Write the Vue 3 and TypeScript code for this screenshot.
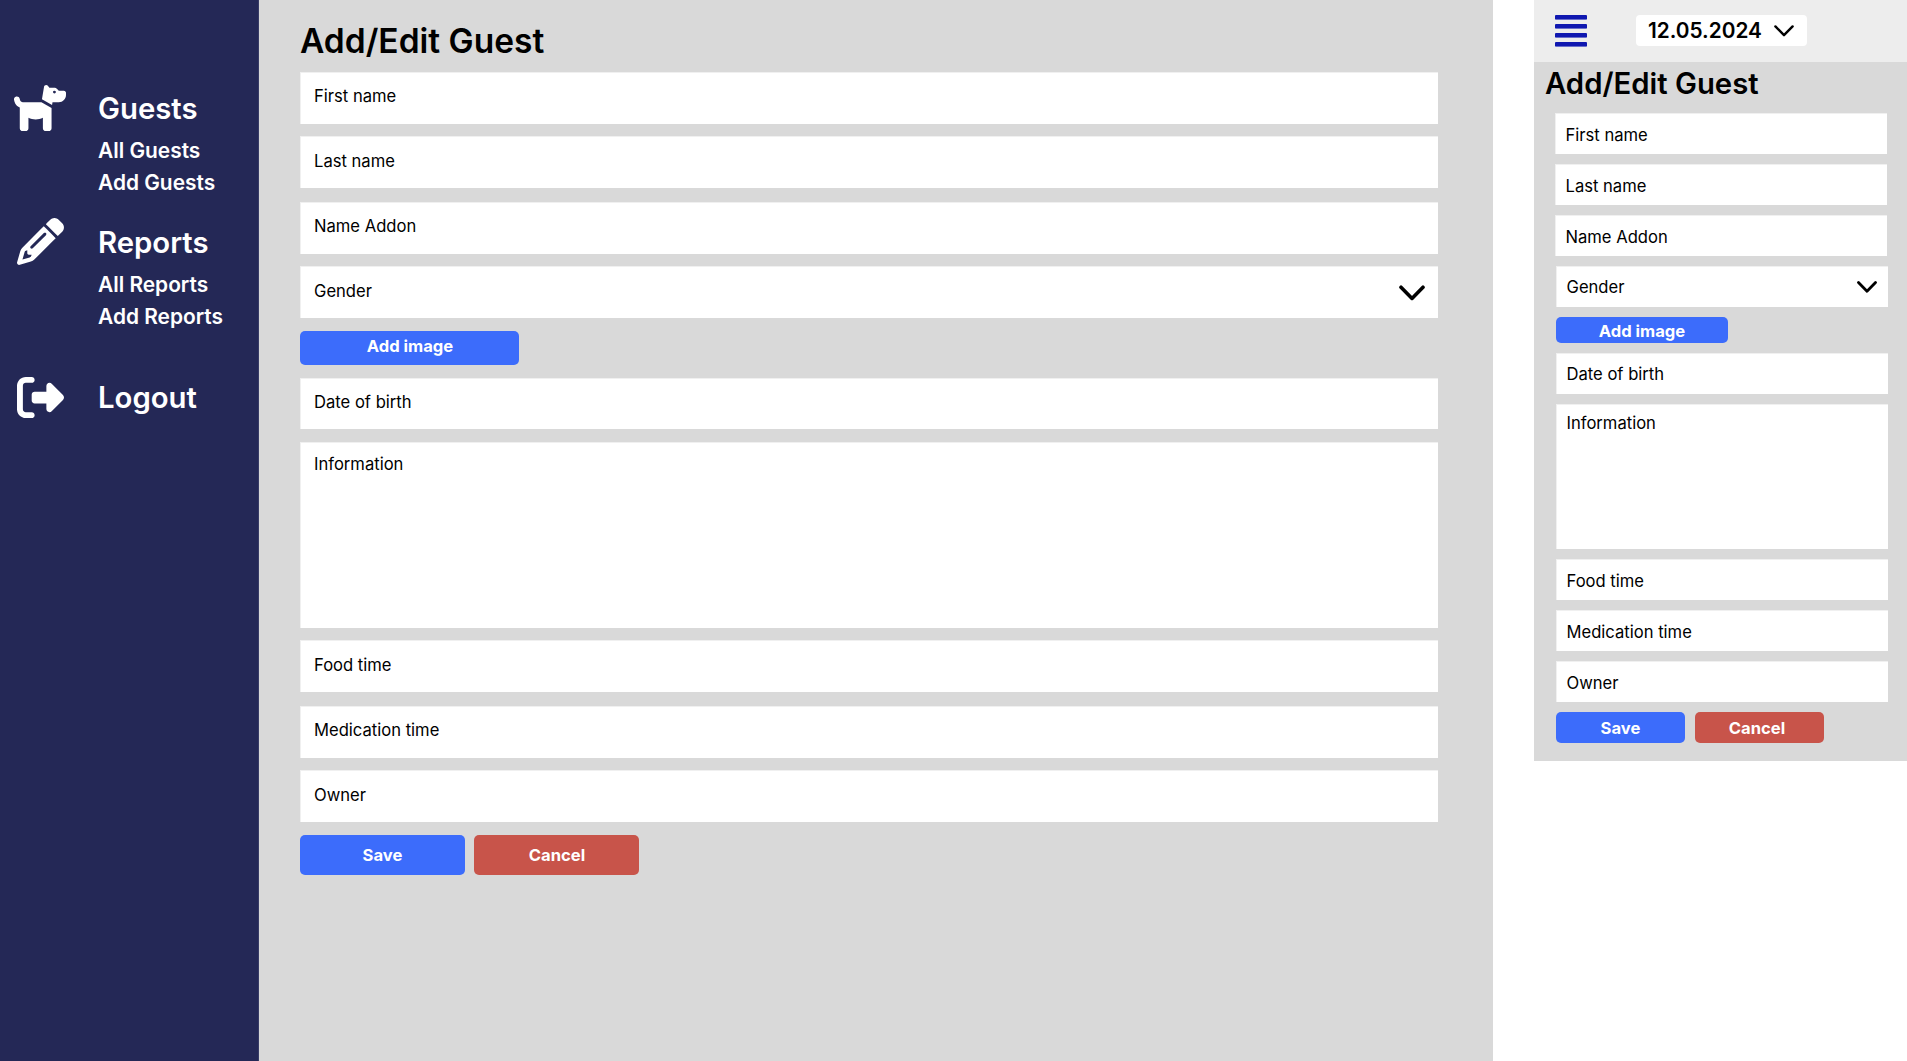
<script setup lang="ts">
interface NavGroup {
  title: string
  icon: string
  viewBox: string
  kind: string
  links: string[]
}

interface FormRow {
  label: string
  kind: 'text' | 'select' | 'area' | 'upload' | 'day'
  low?: boolean
}

const nav: NavGroup[] = [
  {
    title: 'Guests',
    kind: 'dog',
    viewBox: '0 0 576 512',
    icon: 'M309.6 158.5L332.7 19.8C334.6 8.4 344.5 0 356.1 0c7.5 0 14.5 3.5 19 9.5L392 32h52.1c12.7 0 24.9 5.1 33.9 14.1L496 64h56c13.3 0 24 10.7 24 24v24c0 44.2-35.8 80-80 80H464 448 426.7l-5.1 30.5-112-64zM416 256.1L416 480c0 17.7-14.3 32-32 32H352c-17.7 0-32-14.3-32-32V364.8c-24 12.3-51.2 19.2-80 19.2s-56-6.9-80-19.2V480c0 17.7-14.3 32-32 32H96c-17.7 0-32-14.3-32-32V249.8c-28.8-10.9-51.4-35.3-59.2-66.5L1 167.8c-4.3-17.1 6.1-34.5 23.3-38.8s34.5 6.1 38.8 23.3l3.9 15.5C70.5 182 83.3 192 98 192h30 16H303.8L416 256.1zM464 80a16 16 0 1 0 -32 0 16 16 0 1 0 32 0z',
    links: ['All Guests', 'Add Guests'],
  },
  {
    title: 'Reports',
    kind: 'pencil',
    viewBox: '0 0 512 512',
    icon: 'M410.3 231l11.3-11.3-33.9-33.9-62.1-62.1L291.7 89.8l-11.3 11.3-22.6 22.6L58.6 322.9c-10.4 10.4-18 23.3-22.2 37.4L1 480.7c-2.5 8.4-.2 17.5 6.1 23.7s15.3 8.5 23.7 6.1l120.3-35.4c14.1-4.2 27-11.8 37.4-22.2L387.7 253.7 410.3 231zM160 399.4l-9.1 22.7c-4 3.1-8.5 5.4-13.3 6.9L59.4 452l23-78.1c1.4-4.9 3.8-9.4 6.9-13.3l22.7-9.1v32c0 8.8 7.2 16 16 16h32zM362.7 18.7L348.3 33.2 325.7 55.8 314.3 67.1l33.9 33.9 62.1 62.1 33.9 33.9 11.3-11.3 22.6-22.6 14.5-14.5c25-25 25-65.5 0-90.5L453.3 18.7c-25-25-65.5-25-90.5 0zm-47.4 168l-144 144c-6.2 6.2-16.4 6.2-22.6 0s-6.2-16.4 0-22.6l144-144c6.2-6.2 16.4-6.2 22.6 0s6.2 16.4 0 22.6z',
    links: ['All Reports', 'Add Reports'],
  },
  {
    title: 'Logout',
    kind: 'logout',
    viewBox: '0 0 512 512',
    icon: 'M377.9 105.9L500.7 228.7c7.2 7.2 11.3 17.1 11.3 27.3s-4.1 20.1-11.3 27.3L377.9 406.1c-6.4 6.4-15 9.9-24 9.9c-18.7 0-33.9-15.2-33.9-33.9l0-62.1-128 0c-17.7 0-32-14.3-32-32l0-64c0-17.7 14.3-32 32-32l128 0 0-62.1c0-18.7 15.2-33.9 33.9-33.9c9 0 17.6 3.6 24 9.9zM160 96L96 96c-17.7 0-32 14.3-32 32l0 256c0 17.7 14.3 32 32 32l64 0c17.7 0 32 14.3 32 32s-14.3 32-32 32l-64 0c-53 0-96-43-96-96L0 128C0 75 43 32 96 32l64 0c17.7 0 32 14.3 32 32s-14.3 32-32 32z',
    links: [],
  },
]

const rows: FormRow[] = [
  { label: 'First name', kind: 'text' },
  { label: 'Last name', kind: 'text', low: true },
  { label: 'Name Addon', kind: 'text' },
  { label: 'Gender', kind: 'select', low: true },
  { label: 'Add image', kind: 'upload' },
  { label: 'Date of birth', kind: 'day' },
  { label: 'Information', kind: 'area' },
  { label: 'Food time', kind: 'text', low: true },
  { label: 'Medication time', kind: 'text' },
  { label: 'Owner', kind: 'text', low: true },
]
</script>

<template>
  <div class="board">
    <div class="desktop">
      <nav class="sidebar">
        <section v-for="g in nav" :key="g.title" class="group" :class="g.kind">
          <div class="icon-cell">
            <svg class="icon" :viewBox="g.viewBox"><path :d="g.icon" fill="#fff" /></svg>
          </div>
          <div class="links">
            <a class="nav-title">{{ g.title }}</a>
            <a v-for="l in g.links" :key="l" class="nav-link">{{ l }}</a>
          </div>
        </section>
      </nav>
      <main class="content">
        <h1 class="title">Add/Edit Guest</h1>
        <form class="form">
          <template v-for="r in rows" :key="r.label">
            <button v-if="r.kind === 'upload'" type="button" class="btn blue upload">{{ r.label }}</button>
            <div v-else class="field" :class="[r.kind, { low: r.low }]">
              <span class="label">{{ r.label }}</span>
              <svg v-if="r.kind === 'select'" class="chevron" viewBox="0 0 26 16">
                <path d="M2 2.2 13 13.4 24 2.2" />
              </svg>
            </div>
          </template>
          <div class="actions">
            <button type="button" class="btn blue">Save</button>
            <button type="button" class="btn red">Cancel</button>
          </div>
        </form>
      </main>
    </div>

    <div class="mobile">
      <header class="topbar">
        <div class="burger"><i></i><i></i><i></i><i></i></div>
        <div class="date">
          <span>12.05.2024</span>
          <svg class="date-chevron" viewBox="0 0 20 12"><path d="M1.4 1.4 10 10.2 18.6 1.4" /></svg>
        </div>
      </header>
      <h1 class="title">Add/Edit Guest</h1>
      <form class="form">
        <template v-for="r in rows" :key="r.label">
          <button v-if="r.kind === 'upload'" type="button" class="btn blue upload">{{ r.label }}</button>
          <div v-else class="field" :class="r.kind">
            <span class="label">{{ r.label }}</span>
            <svg v-if="r.kind === 'select'" class="chevron" viewBox="0 0 20 12">
              <path d="M1.5 1.6 10 10.2 18.5 1.6" />
            </svg>
          </div>
        </template>
        <div class="actions">
          <button type="button" class="btn blue">Save</button>
          <button type="button" class="btn red">Cancel</button>
        </div>
      </form>
    </div>
  </div>
</template>

<style>
body {
  margin: 0;
  background: #fff;
}
</style>

<style scoped>
.board {
  display: flex;
  align-items: flex-start;
  gap: 41px;
  width: 1907px;
  height: 1061px;
  overflow: hidden;
  font-family: Inter, "Liberation Sans", sans-serif;
  color: #000;
}
.board * {
  box-sizing: border-box;
}
.desktop {
  display: flex;
  flex: none;
  width: 1493px;
  height: 1061px;
}

/* Sidebar */
.sidebar {
  flex: none;
  width: 259px;
  padding-top: 84px;
  background: #242856;
  border-right: 1px solid #383c66;
}
.group {
  display: flex;
  height: 134px;
}
.group.pencil {
  height: 156px;
}
.icon-cell {
  flex: none;
  width: 98px;
  padding-left: 17px;
}
.dog .icon-cell {
  padding-left: 14px;
}
.icon {
  display: block;
  width: 47px;
  height: 47px;
}
.dog .icon {
  width: 52px;
  height: 48px;
}
.links {
  display: flex;
  flex-direction: column;
  padding-top: 7px;
  color: #fff;
  font-weight: 600;
  white-space: nowrap;
}
.logout .links {
  padding-top: 6px;
}
.nav-title {
  margin-bottom: 8px;
  font-size: 29.3px;
  line-height: 36px;
}
.nav-link {
  font-size: 20.9px;
  line-height: 32px;
}

/* Shared form pieces */
.title {
  margin: 0;
  font-weight: 600;
  white-space: nowrap;
}
.form {
  display: grid;
  align-items: start;
}
.field {
  display: flex;
  justify-content: space-between;
  background: #fff;
  border-top: 1px solid #f0f0f0;
  border-left: 1px solid #f0f0f0;
}
.label {
  font-size: 16.6px;
  line-height: 20px;
}
.chevron path,
.date-chevron path {
  fill: none;
  stroke: #000;
  stroke-linecap: round;
  stroke-linejoin: round;
}
.btn {
  padding: 0;
  border: 0;
  border-radius: 5px;
  font-family: inherit;
  font-size: 16.6px;
  font-weight: 700;
  line-height: 20px;
  color: #fff;
}
.blue {
  background: #3c6cfb;
}
.red {
  background: #c8544a;
}
.actions {
  display: flex;
}

/* Desktop form */
.content {
  flex: 1;
  padding: 20px 55px 0 41px;
  background: #d9d9d9;
}
.content .title {
  height: 52px;
  font-size: 33.5px;
  line-height: 42px;
}
.content .form {
  grid-template-rows: 64px 66px 64px 65px 47px 64px 198px 66px 64px 65px 40px;
}
.content .field {
  height: 52px;
  padding: 13px 13px 0 13px;
}
.content .low {
  padding-top: 14px;
}
.content .day {
  height: 51px;
}
.content .area {
  height: 186px;
  padding-top: 11px;
}
.content .chevron {
  width: 26px;
  height: 16px;
  margin-top: 4px;
}
.content .chevron path {
  stroke-width: 3.6;
}
.content .upload {
  width: 219px;
  height: 34px;
  padding: 0 0 5px 1px;
}
.content .actions {
  gap: 9px;
}
.content .actions .btn {
  width: 165px;
  height: 40px;
}
.content .actions .red {
  padding-left: 1px;
}

/* Mobile form */
.mobile {
  flex: none;
  width: 373px;
  height: 761px;
  background: #d9d9d9;
}
.topbar {
  display: flex;
  height: 62px;
  padding: 15px 0 0 21px;
  background: #ededed;
}
.burger {
  display: flex;
  flex-direction: column;
  gap: 4px;
  width: 32px;
  margin-right: 49px;
}
.burger i {
  height: 5px;
  border-radius: 1px;
  background: linear-gradient(#1018b0 4px, #6a6fcb 4px);
}
.date {
  display: flex;
  justify-content: space-between;
  width: 171px;
  height: 31px;
  padding: 0 13px 0 12px;
  border-radius: 4px;
  background: #fff;
  font-size: 20.8px;
  font-weight: 600;
  line-height: 32px;
}
.date-chevron {
  width: 20px;
  height: 12px;
  margin-top: 10px;
}
.date-chevron path {
  stroke-width: 2.4;
}
.mobile .title {
  height: 51px;
  padding-left: 11px;
  font-size: 29.3px;
  line-height: 43px;
}
.mobile .form {
  grid-template-rows: 51px 51px 51px 51px 36px 51px 155px 51px 51px 51px 31px;
  width: 333px;
  margin-left: 21px;
  padding-left: 1px;
}
.mobile .field {
  height: 41px;
  padding: 11px 11px 0 9.5px;
}
.mobile .field:nth-child(-n + 3) {
  margin: 0 1px 0 -1px;
}
.mobile .select,
.mobile .day {
  padding-top: 10px;
}
.mobile .area {
  height: 145px;
  padding-top: 8px;
}
.mobile .chevron {
  width: 20px;
  height: 12px;
  margin-top: 4px;
}
.mobile .chevron path {
  stroke-width: 2.8;
}
.mobile .upload {
  width: 172px;
  height: 26px;
  padding-top: 1px;
}
.mobile .actions {
  gap: 10px;
}
.mobile .actions .btn {
  width: 129px;
  height: 31px;
}
.mobile .red {
  padding-right: 5px;
}
</style>
